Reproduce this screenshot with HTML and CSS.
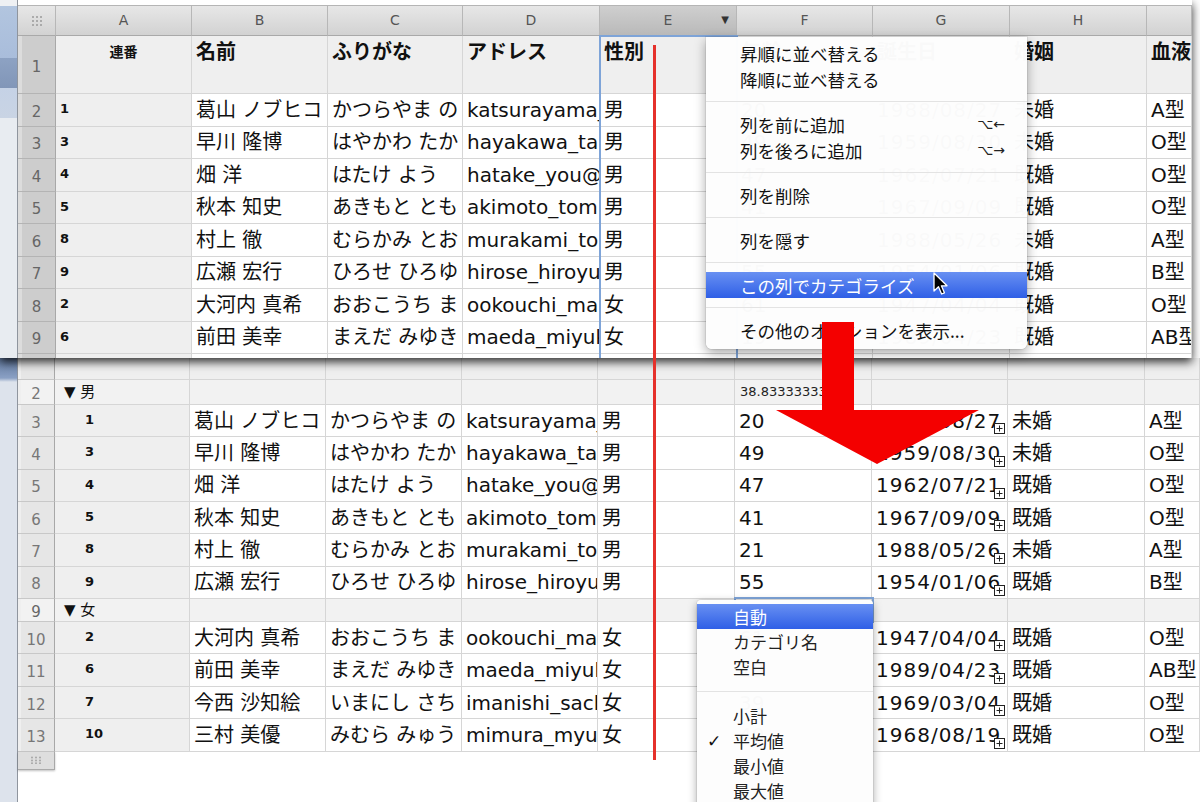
FILE: index.html
```html
<!DOCTYPE html>
<html lang="ja">
<head>
<meta charset="utf-8">
<title>カテゴライズ</title>
<link rel="stylesheet" href="styles.css">
</head>
<body>
<div class="page">
  <section class="shot shot-top">
    <div class="strip strip-top"></div>
    <div class="sheet">
      <div class="topband"></div>
      <div class="row colhead">
        <div class="c corner"><svg width="12" height="12" viewBox="0 0 12 12"><g fill="#9a9a9a"><circle cx="2" cy="2" r="1"/><circle cx="6" cy="2" r="1"/><circle cx="10" cy="2" r="1"/><circle cx="2" cy="6" r="1"/><circle cx="6" cy="6" r="1"/><circle cx="10" cy="6" r="1"/><circle cx="2" cy="10" r="1"/><circle cx="6" cy="10" r="1"/><circle cx="10" cy="10" r="1"/></g></svg></div>
        <div class="c">A</div><div class="c">B</div><div class="c">C</div><div class="c">D</div>
        <div class="c sel">E<span class="drop">▼</span></div>
        <div class="c">F</div><div class="c">G</div><div class="c">H</div><div class="c"></div>
      </div>
      <div class="row hrow">
        <div class="c rh">1</div><div class="c ca ca-h">連番</div><div class="c">名前</div><div class="c">ふりがな</div><div class="c">アドレス</div><div class="c">性別</div><div class="c">年齢</div><div class="c">誕生日</div><div class="c">婚姻</div><div class="c">血液型</div>
      </div>
      <div class="row r"><div class="c rh">2</div><div class="c ca">1</div><div class="c">葛山 ノブヒコ</div><div class="c">かつらやま の</div><div class="c">katsurayama_</div><div class="c">男</div><div class="c">20</div><div class="c dt">1988/08/27</div><div class="c">未婚</div><div class="c">A型</div></div>
      <div class="row r"><div class="c rh">3</div><div class="c ca">3</div><div class="c">早川 隆博</div><div class="c">はやかわ たか</div><div class="c">hayakawa_ta</div><div class="c">男</div><div class="c">49</div><div class="c dt">1959/08/30</div><div class="c">未婚</div><div class="c">O型</div></div>
      <div class="row r"><div class="c rh">4</div><div class="c ca">4</div><div class="c">畑 洋</div><div class="c">はたけ よう</div><div class="c">hatake_you@</div><div class="c">男</div><div class="c">47</div><div class="c dt">1962/07/21</div><div class="c">既婚</div><div class="c">O型</div></div>
      <div class="row r"><div class="c rh">5</div><div class="c ca">5</div><div class="c">秋本 知史</div><div class="c">あきもと とも</div><div class="c">akimoto_tom</div><div class="c">男</div><div class="c">41</div><div class="c dt">1967/09/09</div><div class="c">既婚</div><div class="c">O型</div></div>
      <div class="row r"><div class="c rh">6</div><div class="c ca">8</div><div class="c">村上 徹</div><div class="c">むらかみ とお</div><div class="c">murakami_to</div><div class="c">男</div><div class="c">21</div><div class="c dt">1988/05/26</div><div class="c">未婚</div><div class="c">A型</div></div>
      <div class="row r"><div class="c rh">7</div><div class="c ca">9</div><div class="c">広瀬 宏行</div><div class="c">ひろせ ひろゆ</div><div class="c">hirose_hiroyu</div><div class="c">男</div><div class="c">55</div><div class="c dt">1954/01/06</div><div class="c">既婚</div><div class="c">B型</div></div>
      <div class="row r"><div class="c rh">8</div><div class="c ca">2</div><div class="c">大河内 真希</div><div class="c">おおこうち ま</div><div class="c">ookouchi_ma</div><div class="c">女</div><div class="c">61</div><div class="c dt">1947/04/04</div><div class="c">既婚</div><div class="c">O型</div></div>
      <div class="row r"><div class="c rh">9</div><div class="c ca">6</div><div class="c">前田 美幸</div><div class="c">まえだ みゆき</div><div class="c">maeda_miyuk</div><div class="c">女</div><div class="c">19</div><div class="c dt">1989/04/23</div><div class="c">既婚</div><div class="c">AB型</div></div>
      <div class="row r"><div class="c rh">10</div><div class="c ca">7</div><div class="c">今西 沙知絵</div><div class="c">いまにし さち</div><div class="c">imanishi_sach</div><div class="c">女</div><div class="c">39</div><div class="c dt">1969/03/04</div><div class="c">既婚</div><div class="c">O型</div></div>
    </div>
    <div class="sel-col"></div>
  </section>

  <section class="shot shot-bottom">
    <div class="strip strip-bottom"></div>
    <div class="sheet">
      <div class="row part"><div class="c rh"></div><div class="c"></div><div class="c"></div><div class="c"></div><div class="c"></div><div class="c"></div><div class="c"></div><div class="c"></div><div class="c"></div><div class="c"></div></div>
      <div class="row grp g1"><div class="c rh">2</div><div class="c gname">▼ 男</div><div class="c"></div><div class="c"></div><div class="c"></div><div class="c"></div><div class="c avg">38.8333333333</div><div class="c"></div><div class="c"></div><div class="c"></div></div>
      <div class="row rb"><div class="c rh">3</div><div class="c ca">1</div><div class="c">葛山 ノブヒコ</div><div class="c">かつらやま の</div><div class="c">katsurayama_</div><div class="c">男</div><div class="c">20</div><div class="c dt">1988/08/27<svg class="ovf" viewBox="0 0 11 11"><rect x="0.5" y="0.5" width="10" height="10" fill="#fff" stroke="#222"/><path d="M5.5 2.5v6M2.5 5.5h6" stroke="#222"/></svg></div><div class="c">未婚</div><div class="c">A型</div></div>
      <div class="row rb"><div class="c rh">4</div><div class="c ca">3</div><div class="c">早川 隆博</div><div class="c">はやかわ たか</div><div class="c">hayakawa_ta</div><div class="c">男</div><div class="c">49</div><div class="c dt">1959/08/30<svg class="ovf" viewBox="0 0 11 11"><rect x="0.5" y="0.5" width="10" height="10" fill="#fff" stroke="#222"/><path d="M5.5 2.5v6M2.5 5.5h6" stroke="#222"/></svg></div><div class="c">未婚</div><div class="c">O型</div></div>
      <div class="row rb"><div class="c rh">5</div><div class="c ca">4</div><div class="c">畑 洋</div><div class="c">はたけ よう</div><div class="c">hatake_you@</div><div class="c">男</div><div class="c">47</div><div class="c dt">1962/07/21<svg class="ovf" viewBox="0 0 11 11"><rect x="0.5" y="0.5" width="10" height="10" fill="#fff" stroke="#222"/><path d="M5.5 2.5v6M2.5 5.5h6" stroke="#222"/></svg></div><div class="c">既婚</div><div class="c">O型</div></div>
      <div class="row rb"><div class="c rh">6</div><div class="c ca">5</div><div class="c">秋本 知史</div><div class="c">あきもと とも</div><div class="c">akimoto_tom</div><div class="c">男</div><div class="c">41</div><div class="c dt">1967/09/09<svg class="ovf" viewBox="0 0 11 11"><rect x="0.5" y="0.5" width="10" height="10" fill="#fff" stroke="#222"/><path d="M5.5 2.5v6M2.5 5.5h6" stroke="#222"/></svg></div><div class="c">既婚</div><div class="c">O型</div></div>
      <div class="row rb"><div class="c rh">7</div><div class="c ca">8</div><div class="c">村上 徹</div><div class="c">むらかみ とお</div><div class="c">murakami_to</div><div class="c">男</div><div class="c">21</div><div class="c dt">1988/05/26<svg class="ovf" viewBox="0 0 11 11"><rect x="0.5" y="0.5" width="10" height="10" fill="#fff" stroke="#222"/><path d="M5.5 2.5v6M2.5 5.5h6" stroke="#222"/></svg></div><div class="c">未婚</div><div class="c">A型</div></div>
      <div class="row rb"><div class="c rh">8</div><div class="c ca">9</div><div class="c">広瀬 宏行</div><div class="c">ひろせ ひろゆ</div><div class="c">hirose_hiroyu</div><div class="c">男</div><div class="c">55</div><div class="c dt">1954/01/06<svg class="ovf" viewBox="0 0 11 11"><rect x="0.5" y="0.5" width="10" height="10" fill="#fff" stroke="#222"/><path d="M5.5 2.5v6M2.5 5.5h6" stroke="#222"/></svg></div><div class="c">既婚</div><div class="c">B型</div></div>
      <div class="row grp g2"><div class="c rh rh-sel">9</div><div class="c gname">▼ 女</div><div class="c"></div><div class="c"></div><div class="c"></div><div class="c"></div><div class="c"></div><div class="c"></div><div class="c"></div><div class="c"></div></div>
      <div class="row rc"><div class="c rh">10</div><div class="c ca">2</div><div class="c">大河内 真希</div><div class="c">おおこうち ま</div><div class="c">ookouchi_ma</div><div class="c">女</div><div class="c">61</div><div class="c dt">1947/04/04<svg class="ovf" viewBox="0 0 11 11"><rect x="0.5" y="0.5" width="10" height="10" fill="#fff" stroke="#222"/><path d="M5.5 2.5v6M2.5 5.5h6" stroke="#222"/></svg></div><div class="c">既婚</div><div class="c">O型</div></div>
      <div class="row rc"><div class="c rh">11</div><div class="c ca">6</div><div class="c">前田 美幸</div><div class="c">まえだ みゆき</div><div class="c">maeda_miyuk</div><div class="c">女</div><div class="c">19</div><div class="c dt">1989/04/23<svg class="ovf" viewBox="0 0 11 11"><rect x="0.5" y="0.5" width="10" height="10" fill="#fff" stroke="#222"/><path d="M5.5 2.5v6M2.5 5.5h6" stroke="#222"/></svg></div><div class="c">既婚</div><div class="c">AB型</div></div>
      <div class="row rc"><div class="c rh">12</div><div class="c ca">7</div><div class="c">今西 沙知絵</div><div class="c">いまにし さち</div><div class="c">imanishi_sach</div><div class="c">女</div><div class="c">39</div><div class="c dt">1969/03/04<svg class="ovf" viewBox="0 0 11 11"><rect x="0.5" y="0.5" width="10" height="10" fill="#fff" stroke="#222"/><path d="M5.5 2.5v6M2.5 5.5h6" stroke="#222"/></svg></div><div class="c">既婚</div><div class="c">O型</div></div>
      <div class="row rc"><div class="c rh">13</div><div class="c ca">10</div><div class="c">三村 美優</div><div class="c">みむら みゅう</div><div class="c">mimura_myu</div><div class="c">女</div><div class="c">40</div><div class="c dt">1968/08/19<svg class="ovf" viewBox="0 0 11 11"><rect x="0.5" y="0.5" width="10" height="10" fill="#fff" stroke="#222"/><path d="M5.5 2.5v6M2.5 5.5h6" stroke="#222"/></svg></div><div class="c">既婚</div><div class="c">O型</div></div>
      <div class="row foot"><div class="c rh"><svg width="12" height="8" viewBox="0 0 12 8"><g fill="#a0a0a0"><circle cx="2" cy="1.5" r="0.9"/><circle cx="6" cy="1.5" r="0.9"/><circle cx="10" cy="1.5" r="0.9"/><circle cx="2" cy="4.5" r="0.9"/><circle cx="6" cy="4.5" r="0.9"/><circle cx="10" cy="4.5" r="0.9"/><circle cx="2" cy="7.2" r="0.9"/><circle cx="6" cy="7.2" r="0.9"/><circle cx="10" cy="7.2" r="0.9"/></g></svg></div></div>
    </div>
    <div class="sel-cell"></div>
  </section>

  <div class="menu">
    <div class="mi">昇順に並べ替える</div>
    <div class="mi">降順に並べ替える</div>
    <div class="sep"></div>
    <div class="mi"><span>列を前に追加</span><span class="key">⌥←</span></div>
    <div class="mi"><span>列を後ろに追加</span><span class="key">⌥→</span></div>
    <div class="sep"></div>
    <div class="mi">列を削除</div>
    <div class="sep"></div>
    <div class="mi">列を隠す</div>
    <div class="sep"></div>
    <div class="mi hl">この列でカテゴライズ</div>
    <div class="sep"></div>
    <div class="mi">その他のオプションを表示...</div>
  </div>

  <div class="popup">
    <div class="pi hl">自動</div>
    <div class="pi">カテゴリ名</div>
    <div class="pi">空白</div>
    <div class="psep"></div>
    <div class="pi">小計</div>
    <div class="pi"><span class="check">✓</span>平均値</div>
    <div class="pi">最小値</div>
    <div class="pi">最大値</div>
  </div>

  <svg class="cursor" width="16" height="26" viewBox="0 0 16 26"><path d="M1 1 L1 19 L5.5 14.8 L8.6 22 L11.4 20.8 L8.4 13.8 L14 13.8 Z" fill="#000" stroke="#fff" stroke-width="1.3" stroke-linejoin="round"/></svg>

  <div class="redline"></div>

  <svg class="arrow" width="204" height="143" viewBox="0 0 204 143"><polygon points="46,0 78,0 78,88 203,88 101,142 0,88 46,88" fill="#f40000"/></svg>
</div>
</body>
</html>
```

FILE: styles.css
```css
* { box-sizing: border-box; }
html, body { margin: 0; padding: 0; }
body {
  width: 1200px;
  height: 802px;
  overflow: hidden;
  background: #fff;
  font-family: "DejaVu Sans", "Noto Sans CJK JP", sans-serif;
  color: #111;
}
.page { position: relative; width: 1200px; height: 802px; overflow: hidden; }

.shot { display: flex; }
.shot-top {
  position: relative;
  z-index: 2;
  width: 1192px;
  height: 358px;
  overflow: hidden;
  background: #fff;
  box-shadow: 0 4px 9px rgba(0, 0, 0, 0.8);
}
.shot-bottom { position: relative; z-index: 1; height: 444px; }

.strip { width: 18px; flex: none; border-right: 1px solid #8f959e; }
.strip-top {
  background: linear-gradient(to bottom,
    #eef0f3 0, #eef0f3 6px,
    #b2c5df 6px, #a9bddb 58px,
    #8da2c3 58px, #8196b8 88px,
    #c5d2e6 88px, #c9d4e4 118px,
    #e8ecf1 118px, #e8ecf1 100%);
}
.strip-bottom {
  background: linear-gradient(to bottom, #61799f 0, #8aa0c4 20px, #dde3ec 24px, #dde3ec 100%);
}

.sheet { flex: 1; min-width: 0; display: flex; flex-direction: column; }
.topband { flex: none; height: 6px; background: #fff; border-bottom: 1px solid #b5b5b5; }

.row {
  display: grid;
  flex: none;
  grid-template-columns: 38px 136px 136px 135px 137px 137px 136px 137px 137px 1fr;
}
.shot-bottom .row {
  grid-template-columns: 37px 135px 136px 136px 136px 137px 137px 136px 137px 1fr;
}

.c {
  position: relative;
  display: flex;
  align-items: center;
  overflow: hidden;
  white-space: nowrap;
  padding: 0 4px;
  font-size: 20px;
  line-height: 1.2;
  border-right: 1px solid #d6d6d6;
  border-bottom: 1px solid #d6d6d6;
}

/* column header */
.colhead { height: 30px; }
.colhead .c {
  justify-content: center;
  font-size: 14px;
  color: #555;
  background: linear-gradient(#e7e7e7, #d2d2d2);
  border-right-color: #b7b7b7;
  border-bottom-color: #a9a9a9;
}
.colhead .sel { background: linear-gradient(#cfcfcf, #b9b9b9); }
.colhead .corner { padding: 0; }
.drop { position: absolute; right: 7px; top: 8px; font-size: 10px; color: #333; }

/* row headers */
.rh {
  justify-content: center;
  padding: 0;
  font-size: 15px;
  color: #666;
  background: #cdcdcd;
  border-right: 1px solid #a8a8a8;
  border-bottom: 1px solid #b4b4b4;
  box-shadow: inset 4px 0 0 #dcdcdc;
  padding-top: 4px;
}
.shot-bottom .rh { background: #e6e6e6; color: #777; border-bottom-color: #c8c8c8; box-shadow: inset 3px 0 0 #efefef; }
.shot-bottom .rh-sel { background: #cacaca; color: #666; }

/* header row */
.hrow { height: 58px; }
.hrow .c {
  align-items: flex-start;
  padding-top: 4px;
  font-weight: bold;
  background: #efefef;
}
.hrow .rh { align-items: center; font-weight: normal; background: #cdcdcd; }
.hrow .ca-h { justify-content: center; font-size: 14px; padding-top: 8px; }

/* data */
.r { height: 32.5px; }
.rb { height: 32.34px; }
.rc { height: 32.5px; }
.ca {
  align-items: flex-start;
  padding-top: 7px;
  font-size: 13px;
  font-weight: bold;
  background: #efefef;
}
.shot-bottom .ca { padding-left: 30px; }
.dt { letter-spacing: 1px; }
.ovf { position: absolute; right: 2px; bottom: 2px; width: 11px; height: 11px; }

/* bottom partial header row & groups */
.part { height: 22px; }
.part .c { background: #efefef; }
.part .rh { background: #e6e6e6; }
.grp .c { background: #f2f2f2; }
.g1 { height: 25px; }
.g2 { height: 23px; }
.gname { font-size: 15px; padding-left: 9px; }
.avg { font-size: 13px; padding-left: 5px; color: #222; }
.foot { height: 18px; grid-template-columns: 37px !important; }
.foot .rh { padding: 0; background: #dedede; border-bottom: 1px solid #aaa; box-shadow: 0 1px 2px rgba(0,0,0,.25); }

/* selections */
.sel-col {
  position: absolute;
  left: 599px;
  top: 35px;
  width: 139px;
  height: 330px;
  border: 2px solid #7ea4d8;
}
.sel-cell {
  position: absolute;
  left: 734px;
  top: 239px;
  width: 140px;
  height: 26px;
  border: 2px solid #7ea4d8;
}

/* context menu */
.menu {
  position: absolute;
  z-index: 5;
  left: 706px;
  top: 37px;
  width: 321px;
  padding: 3px 0 6px;
  background: rgba(253, 253, 253, 0.985);
  border-radius: 0 0 6px 6px;
  box-shadow: 0 4px 12px rgba(0, 0, 0, 0.35), 0 0 0 1px rgba(0, 0, 0, 0.06);
  font-family: "Noto Sans CJK JP", sans-serif;
  font-size: 17.5px;
}
.mi {
  height: 26px;
  display: flex;
  align-items: center;
  justify-content: space-between;
  padding: 0 22px 0 34px;
  color: #111;
  white-space: nowrap;
}
.mi.hl { background: linear-gradient(#6890f2, #2f5fe6); color: #fff; }
.key { font-family: "DejaVu Sans", sans-serif; font-size: 14px; color: #222; }
.sep { height: 19px; display: flex; align-items: center; }
.sep::before { content: ""; flex: 1; height: 1px; background: #e3e3e3; }

/* popup */
.popup {
  position: absolute;
  z-index: 5;
  left: 697px;
  top: 600px;
  width: 176px;
  height: 220px;
  padding-top: 4px;
  background: rgba(253, 253, 253, 0.985);
  border-radius: 4px;
  box-shadow: 0 3px 10px rgba(0, 0, 0, 0.35), 0 0 0 1px rgba(0, 0, 0, 0.06);
  font-family: "Noto Sans CJK JP", sans-serif;
  font-size: 17px;
}
.pi {
  position: relative;
  height: 25px;
  display: flex;
  align-items: center;
  padding-left: 36px;
  color: #222;
}
.pi.hl { background: linear-gradient(#6890f2, #2f5fe6); color: #fff; }
.psep { height: 24px; display: flex; align-items: center; }
.psep::before { content: ""; flex: 1; height: 1px; background: #e3e3e3; }
.check { position: absolute; left: 10px; font-family: "DejaVu Sans", sans-serif; font-size: 17px; color: #111; }

/* annotations */
.cursor { position: absolute; z-index: 6; left: 933px; top: 272px; }
.redline {
  position: absolute;
  z-index: 4;
  left: 653px;
  top: 45px;
  width: 3px;
  height: 715px;
  background: #e5312b;
}
.arrow { position: absolute; z-index: 7; left: 776px; top: 322px; }
```
